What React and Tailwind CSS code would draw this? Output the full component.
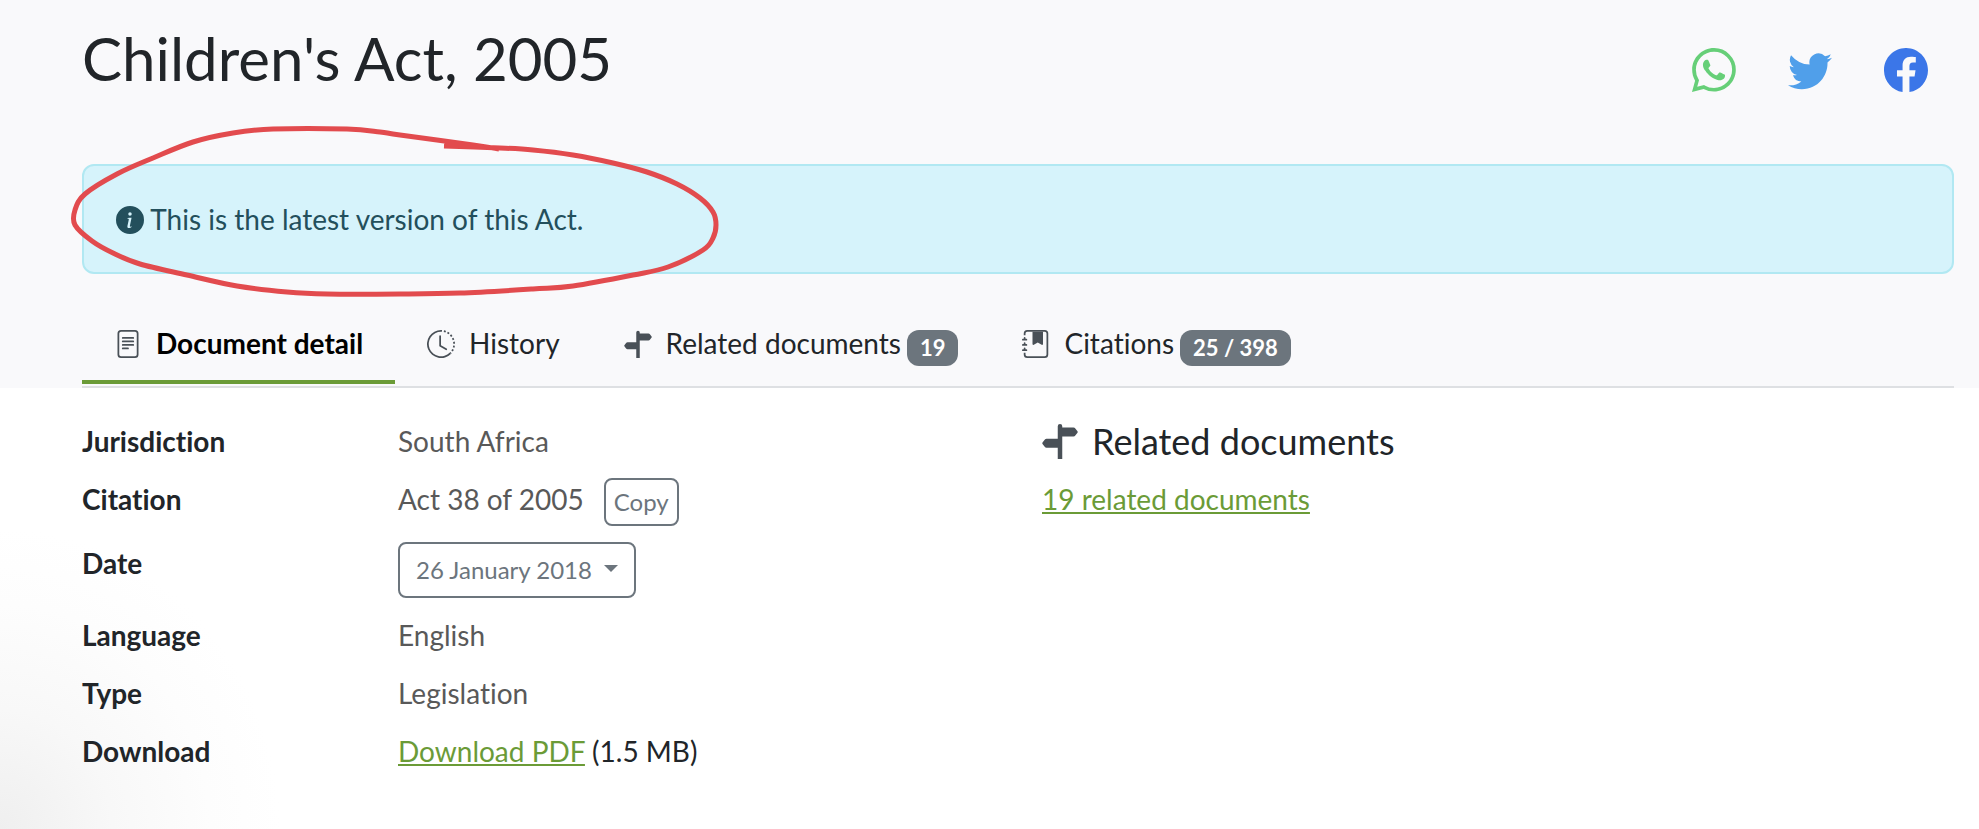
import {
  BsClockHistory,
  BsFacebook,
  BsFileText,
  BsInfoCircleFill,
  BsJournalBookmarkFill,
  BsSignpostSplitFill,
  BsTwitter,
  BsWhatsapp,
} from "react-icons/bs";

const shareLinks = [
  { label: "Share on WhatsApp", Icon: BsWhatsapp, color: "text-[#66cf78]" },
  { label: "Share on Twitter", Icon: BsTwitter, color: "text-[#509fea]" },
  { label: "Share on Facebook", Icon: BsFacebook, color: "text-[#3b76e8]" },
];

const tabs = [
  { label: "Document detail", Icon: BsFileText, active: true },
  { label: "History", Icon: BsClockHistory },
  { label: "Related documents", Icon: BsSignpostSplitFill, badge: "19" },
  { label: "Citations", Icon: BsJournalBookmarkFill, badge: "25 / 398" },
];

// Points along the hand-drawn marker loop, in drawing order.
const loop = [
  [444, 146], [500, 148], [533, 150], [573, 155], [613, 163], [647, 172],
  [677, 184], [700, 198], [713, 212], [716, 225], [713, 238], [703, 250],
  [668, 267], [633, 275], [573, 286], [533, 289], [460, 293], [400, 294],
  [327, 294], [287, 292], [237, 286], [187, 275], [140, 264], [113, 253],
  [92, 241], [75, 225], [75, 210], [85, 194], [117, 174], [153, 158],
  [193, 142], [233, 133], [273, 129], [347, 129], [380, 132], [400, 135],
  [473, 145], [499, 149],
];

// Catmull-Rom spline through the points, written as cubic Béziers.
function smoothPath(points) {
  const at = (i) => points[Math.max(0, Math.min(points.length - 1, i))];
  let d = `M${at(0)[0]} ${at(0)[1]}`;
  for (let i = 0; i < points.length - 1; i++) {
    const [a, b, c, e] = [at(i - 1), at(i), at(i + 1), at(i + 2)];
    d += ` C${b[0] + (c[0] - a[0]) / 6} ${b[1] + (c[1] - a[1]) / 6} ${c[0] - (e[0] - b[0]) / 6} ${c[1] - (e[1] - b[1]) / 6} ${c[0]} ${c[1]}`;
  }
  return d;
}

function MarkerLoop() {
  return (
    <svg
      aria-hidden="true"
      className="pointer-events-none absolute top-0 left-0"
      width="740"
      height="310"
      fill="none"
      stroke="#e24b4e"
      strokeWidth="5"
      strokeLinejoin="round"
    >
      <path d={smoothPath(loop)} />
    </svg>
  );
}

function Row({ label, children }) {
  return (
    <div className="grid grid-cols-3 gap-9">
      <dt className="font-bold">{label}</dt>
      <dd className="col-span-2 text-[#595959]">{children}</dd>
    </div>
  );
}

export default function App() {
  return (
    <div className="relative min-h-screen bg-white bg-[radial-gradient(ellipse_280px_300px_at_bottom_left,#efefef,#f8f8f8_40%,#fdfdfd_75%,#ffffff)] font-['Lato',sans-serif] text-[28px] leading-[42px] text-[#212529] [font-variant-ligatures:none]">
      <header className="bg-[#f9f9fb] pt-[22px] pr-[25px] pl-[82px]">
        <div className="flex items-start justify-between">
          <h1 className="text-[60px] leading-[72px]">Children's Act, 2005</h1>
          <div className="flex">
            {shareLinks.map(({ label, Icon, color }) => (
              <a key={label} href="#" aria-label={label} className={`p-[26px] ${color}`}>
                <Icon size={44} />
              </a>
            ))}
          </div>
        </div>

        <div role="status" className="mt-[46px] rounded-xl border-2 border-[#b1e8f2] bg-[#d6f3fb] p-8 text-[#234f5c]">
          <BsInfoCircleFill className="inline-block align-[-4px]" /> This is the latest version of this Act.
        </div>

        <nav className="mt-8 flex border-b-2 border-[#dee0e3] pb-[2px]" aria-label="Document sections">
          {tabs.map(({ label, Icon, badge, active }) => (
            <a
              key={label}
              href="#"
              aria-current={active ? "page" : undefined}
              className={`flex border-b-4 px-8 pt-4 ${active ? "border-[#6b9b37] font-bold text-black" : "border-transparent"}`}
            >
              <Icon className="mt-2 mr-[14px] text-[#495057]" />
              <span className="pb-4">{label}</span>
              {badge && (
                <span className="mt-2 ml-[6px] self-start rounded-xl bg-[#6c757d] px-[13px] text-[22px] leading-9 font-bold text-white">
                  {badge}
                </span>
              )}
            </a>
          ))}
        </nav>
      </header>

      <main className="grid grid-cols-2 gap-12 pt-8 pr-[25px] pb-12 pl-[82px]">
        <dl className="flex flex-col gap-4">
          <Row label="Jurisdiction">South Africa</Row>
          <Row label="Citation">
            <div className="flex items-start gap-5">
              Act 38 of 2005
              <button type="button" className="rounded-lg border-2 border-[#6c757d] px-2 py-1 text-[24px] leading-9 text-[#6c757d]">
                Copy
              </button>
            </div>
          </Row>
          <Row label="Date">
            <div className="grid w-fit items-center">
              <select
                aria-label="Date"
                className="col-start-1 row-start-1 h-14 appearance-none rounded-lg border-2 border-[#6c757d] bg-transparent pr-10 pl-4 text-[24px] leading-9 text-[#6c757d]"
              >
                <option>26 January 2018</option>
              </select>
              <svg
                aria-hidden="true"
                className="pointer-events-none col-start-1 row-start-1 mr-[18px] mb-1 justify-self-end fill-[#6c757d]"
                width="14"
                height="7"
                viewBox="0 0 14 7"
              >
                <path d="M0 0h14L7 7z" />
              </svg>
            </div>
          </Row>
          <Row label="Language">English</Row>
          <Row label="Type">Legislation</Row>
          <Row label="Download">
            <a href="#" className="text-[#6b9b37] underline">Download PDF</a>
            <span className="text-[#212529]"> (1.5 MB)</span>
          </Row>
        </dl>

        <section>
          <h2 className="flex items-center gap-[14px] text-[36px]">
            <BsSignpostSplitFill className="text-[#495057]" />
            Related documents
          </h2>
          <a href="#" className="mt-4 inline-block text-[#6b9b37] underline">19 related documents</a>
        </section>
      </main>

      <MarkerLoop />
    </div>
  );
}
